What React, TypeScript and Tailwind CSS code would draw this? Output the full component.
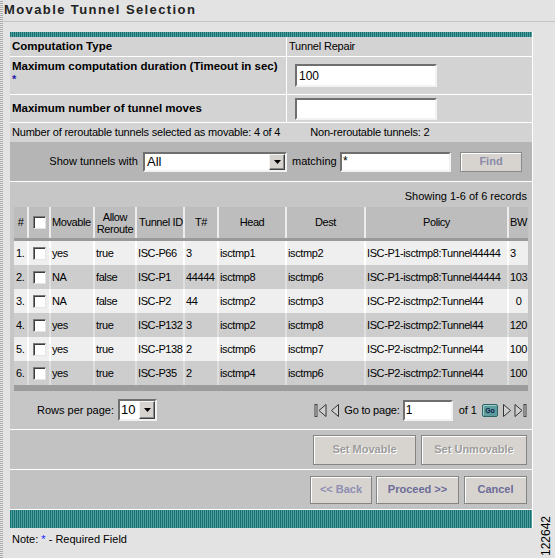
import React from "react";

const rows: string[][] = [
  ["1.", "yes", "true", "ISC-P66", "3", "isctmp1", "isctmp2", "ISC-P1-isctmp8:Tunnel44444", "3"],
  ["2.", "NA", "false", "ISC-P1", "44444", "isctmp8", "isctmp6", "ISC-P1-isctmp8:Tunnel44444", "103"],
  ["3.", "NA", "false", "ISC-P2", "44", "isctmp2", "isctmp3", "ISC-P2-isctmp2:Tunnel44", "0"],
  ["4.", "yes", "true", "ISC-P132", "3", "isctmp2", "isctmp8", "ISC-P2-isctmp2:Tunnel44", "120"],
  ["5.", "yes", "true", "ISC-P138", "2", "isctmp6", "isctmp7", "ISC-P2-isctmp2:Tunnel44", "100"],
  ["6.", "yes", "true", "ISC-P35", "2", "isctmp4", "isctmp6", "ISC-P2-isctmp2:Tunnel44", "100"],
];

function Check() {
  return (
    <span className="block w-[13px] h-[13px] bg-white border border-t-[#7c7c7c] border-l-[#7c7c7c] border-r-[#e4e4e4] border-b-[#e4e4e4] shadow-[inset_1px_1px_0_#3c3c3c]" />
  );
}

function DropBtn() {
  return (
    <div className="w-[16px] h-full bg-[#d6d3ce] border border-t-[#f4f4f4] border-l-[#f4f4f4] border-r-[#404040] border-b-[#404040] shadow-[inset_-1px_-1px_0_#8a8a8a] flex items-center justify-center">
      <svg width="7" height="4" viewBox="0 0 7 4">
        <path d="M0 0h7L3.5 4z" fill="#000" />
      </svg>
    </div>
  );
}

const teal =
  "bg-[repeating-linear-gradient(90deg,#17706f_0_1px,#4f9f9f_1px_2px)]";

export default function App() {
  return (
    <div className="w-[555px] h-[558px] bg-[#e3e3e3] flex relative overflow-hidden font-['Liberation_Sans',Arial,sans-serif] text-[11px] text-black">
      {/* dotted left strip */}
      <div className="w-[3px] h-full bg-[repeating-linear-gradient(0deg,#a9a9a9_0_1px,#e6e6e6_1px_2px)]" />

      <div className="flex-1 flex flex-col">
        {/* title */}
        <div className="h-[22px] border-b border-[#c4c4c4] pl-[1px] pt-[2px]">
          <span className="text-[13px] leading-[16px] font-bold tracking-[1.4px] text-[#222]">
            Movable Tunnel Selection
          </span>
        </div>

        {/* panel */}
        <div className="ml-[7px] mt-[10px] w-[523px] border-r border-white flex flex-col">
          <div className={`h-[5px] ${teal}`} />

          {/* Computation Type */}
          <div className="h-[20px] flex bg-[#d3d3d3] border-b border-white">
            <div className="w-[277px] border-r border-white pl-[2px] flex items-center font-bold text-[11.5px]">
              Computation Type
            </div>
            <div className="flex-1 pl-[2px] flex items-center tracking-[-0.2px]">Tunnel Repair</div>
          </div>

          {/* Max computation duration */}
          <div className="h-[38px] flex bg-[#d3d3d3] border-b border-white">
            <div className="w-[277px] border-r border-white pl-[2px] pt-[3px] flex flex-col leading-[13px]">
              <span className="font-bold text-[11.5px]">Maximum computation duration (Timeout in sec)</span>
              <span className="text-[#1a1ab0] font-bold">*</span>
            </div>
            <div className="flex-1 flex items-center pl-[8px]">
              <div className="w-[142px] h-[23px] bg-white border-2 border-t-[#6f6f6f] border-l-[#6f6f6f] border-r-[#f2f2f2] border-b-[#f2f2f2] pl-[2px] flex items-center text-[12px]">
                100
              </div>
            </div>
          </div>

          {/* Max tunnel moves */}
          <div className="h-[28px] flex bg-[#d3d3d3] border-b border-white">
            <div className="w-[277px] border-r border-white pl-[2px] flex items-center font-bold text-[11.5px]">
              Maximum number of tunnel moves
            </div>
            <div className="flex-1 flex items-center pl-[8px]">
              <div className="w-[142px] h-[22px] bg-white border-2 border-t-[#6f6f6f] border-l-[#6f6f6f] border-r-[#f2f2f2] border-b-[#f2f2f2]" />
            </div>
          </div>

          {/* counts */}
          <div className="h-[19px] flex items-center bg-[#d3d3d3] pl-[2px] tracking-[-0.2px]">
            <span>Number of reroutable tunnels selected as movable: 4 of 4</span>
            <span className="ml-[30px]">Non-reroutable tunnels: 2</span>
          </div>

          {/* filter bar */}
          <div className="h-[40px] flex items-center bg-[#b5b5b5] border-b border-white">
            <div className="w-[133px] text-right pr-[5px]">Show tunnels with</div>
            <div className="w-[144px] h-[20px] flex bg-white border-2 border-t-[#6f6f6f] border-l-[#6f6f6f] border-r-[#f2f2f2] border-b-[#f2f2f2]">
              <span className="flex-1 pl-[2px] text-[13px] leading-[16px]">All</span>
              <DropBtn />
            </div>
            <div className="w-[53px] pl-[5px]">matching</div>
            <div className="w-[111px] h-[20px] bg-white border-2 border-t-[#6f6f6f] border-l-[#6f6f6f] border-r-[#f2f2f2] border-b-[#f2f2f2] pl-[1px] text-[12px] leading-[15px]">
              *
            </div>
            <div className="ml-[9px] w-[62px] h-[20px] bg-[#d7d4cf] border border-[#8a8a8a] shadow-[inset_1px_1px_0_#ffffff] flex items-center justify-center font-bold text-[#8a8aa8]">
              Find
            </div>
          </div>

          {/* table area */}
          <div className="bg-[#c6c6c6] flex flex-col border-b border-white">
            <div className="h-[25px] flex items-end justify-end pr-[5px] pb-[3px]">
              Showing 1-6 of 6 records
            </div>
            <div className="px-[4px] tracking-[-0.4px]">
              {/* header */}
              <div className="grid grid-cols-[13px_20px_42px_40px_46px_32px_66px_77px_141px_19px] gap-x-[2px] bg-[#ececec] h-[31px] whitespace-nowrap">
                <div className="bg-[#bdbdbd] flex items-center justify-center">#</div>
                <div className="bg-[#bdbdbd] flex items-center justify-center"><Check /></div>
                <div className="bg-[#bdbdbd] flex items-center pl-[1px]">Movable</div>
                <div className="bg-[#bdbdbd] flex items-center justify-center text-center leading-[12px]">Allow<br />Reroute</div>
                <div className="bg-[#bdbdbd] flex items-center pl-[2px]">Tunnel ID</div>
                <div className="bg-[#bdbdbd] flex items-center justify-center">T#</div>
                <div className="bg-[#bdbdbd] flex items-center justify-center">Head</div>
                <div className="bg-[#bdbdbd] flex items-center justify-center">Dest</div>
                <div className="bg-[#bdbdbd] flex items-center justify-center">Policy</div>
                <div className="bg-[#bdbdbd] flex items-center pl-[1px]">BW</div>
              </div>
              <div className="h-[3px] bg-[#9a9a9a]" />
              {rows.map((r, i) => {
                const light = i % 2 === 0;
                const cell = light ? "bg-[#efefef]" : "bg-[#cdcdcd]";
                const bwAlign =
                  i < 2 ? "justify-start pl-[1px]" : i === 2 ? "justify-center" : "justify-end pr-[1px]";
                return (
                  <div
                    key={i}
                    className={`grid grid-cols-[13px_20px_42px_40px_46px_32px_66px_77px_141px_19px] gap-x-[2px] h-[24px] whitespace-nowrap ${
                      light ? "bg-white" : "bg-[#dedede]"
                    }`}
                  >
                    <div className={`${cell} flex items-center pl-[2px]`}>{r[0]}</div>
                    <div className={`${cell} flex items-center justify-center`}><Check /></div>
                    <div className={`${cell} flex items-center pl-[1px]`}>{r[1]}</div>
                    <div className={`${cell} flex items-center pl-[1px]`}>{r[2]}</div>
                    <div className={`${cell} flex items-center pl-[1px]`}>{r[3]}</div>
                    <div className={`${cell} flex items-center pl-[1px]`}>{r[4]}</div>
                    <div className={`${cell} flex items-center pl-[1px]`}>{r[5]}</div>
                    <div className={`${cell} flex items-center pl-[1px]`}>{r[6]}</div>
                    <div className={`${cell} flex items-center pl-[1px]`}>{r[7]}</div>
                    <div className={`${cell} flex items-center ${bwAlign}`}>{r[8]}</div>
                  </div>
                );
              })}
              <div className="h-[6px] bg-[#9c9c9c]" />
            </div>

            {/* pagination */}
            <div className="h-[38px] flex items-center">
              <div className="w-[108px] text-right pr-[4px]">Rows per page:</div>
              <div className="w-[39px] h-[22px] flex bg-white border-2 border-t-[#6f6f6f] border-l-[#6f6f6f] border-r-[#f2f2f2] border-b-[#f2f2f2]">
                <span className="flex-1 pl-[1px] text-[13px] leading-[18px]">10</span>
                <DropBtn />
              </div>
              <div className="ml-auto pr-[5px] flex items-center">
                <svg width="13" height="15" viewBox="0 0 13 15">
                  <rect x="1" y="1.5" width="2" height="12" fill="#d8d8d8" stroke="#333" strokeWidth="0.9" />
                  <path d="M12 1.5L5 7.5l7 6z" fill="#d0d0d0" stroke="#333" strokeWidth="1" />
                </svg>
                <svg width="10" height="15" viewBox="0 0 10 15" className="ml-[3px]">
                  <path d="M8.5 1.5L1.5 7.5l7 6z" fill="#d0d0d0" stroke="#333" strokeWidth="1" />
                </svg>
                <span className="ml-[4px] tracking-[-0.2px]">Go to page:</span>
                <div className="ml-[3px] w-[50px] h-[21px] bg-white border-2 border-t-[#6f6f6f] border-l-[#6f6f6f] border-r-[#f2f2f2] border-b-[#f2f2f2] pl-[1px] text-[12px] leading-[17px]">
                  1
                </div>
                <span className="ml-[6px]">of 1</span>
                <div className="ml-[5px] w-[16px] h-[13px] rounded-[2px] bg-[#5c9c9c] border border-[#2e6464] shadow-[inset_1px_1px_0_#9ccccc] flex items-center justify-center text-[7px] font-bold text-[#10204a] leading-none">
                  Go
                </div>
                <svg width="10" height="15" viewBox="0 0 10 15" className="ml-[4px]">
                  <path d="M1.5 1.5l7 6-7 6z" fill="#d0d0d0" stroke="#333" strokeWidth="1" />
                </svg>
                <svg width="13" height="15" viewBox="0 0 13 15" className="ml-[2px]">
                  <path d="M1 1.5l7 6-7 6z" fill="#d0d0d0" stroke="#333" strokeWidth="1" />
                  <rect x="10" y="1.5" width="2" height="12" fill="#d8d8d8" stroke="#333" strokeWidth="0.9" />
                </svg>
              </div>
            </div>
          </div>

          {/* set buttons */}
          <div className="h-[40px] flex items-center justify-end pr-[5px] gap-[5px] bg-[#c2c2c2] border-b border-white">
            <div className="w-[103px] h-[30px] bg-[#d7d4cf] border border-[#858585] shadow-[inset_1px_1px_0_#ffffff] flex items-center justify-center font-bold text-[#9c9c9c] [text-shadow:1px_1px_0_#ffffff]">
              Set Movable
            </div>
            <div className="w-[106px] h-[30px] bg-[#d7d4cf] border border-[#858585] shadow-[inset_1px_1px_0_#ffffff] flex items-center justify-center font-bold text-[#9c9c9c] [text-shadow:1px_1px_0_#ffffff]">
              Set Unmovable
            </div>
          </div>

          {/* nav buttons */}
          <div className="h-[40px] flex items-center justify-end pr-[5px] bg-[#c2c2c2] border-b border-white">
            <div className="w-[62px] h-[28px] bg-[#d7d4cf] border border-[#858585] shadow-[inset_1px_1px_0_#ffffff] flex items-center justify-center font-bold text-[#8e8eb4]">
              &lt;&lt; Back
            </div>
            <div className="ml-[4px] w-[83px] h-[28px] bg-[#d7d4cf] border border-[#858585] shadow-[inset_1px_1px_0_#ffffff] flex items-center justify-center font-bold text-[#6c6c98]">
              Proceed &gt;&gt;
            </div>
            <div className="ml-[5px] w-[63px] h-[28px] bg-[#d7d4cf] border border-[#858585] shadow-[inset_1px_1px_0_#ffffff] flex items-center justify-center font-bold text-[#6c6c98]">
              Cancel
            </div>
          </div>

          <div className={`h-[18px] ${teal}`} />
        </div>

        {/* note */}
        <div className="ml-[9px] mt-[5px] leading-[12px]">
          Note: <span className="text-[#1a1aff]">*</span> - Required Field
        </div>
      </div>

      {/* figure id */}
      <span className="absolute right-[2px] bottom-[2px] [writing-mode:vertical-rl] rotate-180 text-[12px] leading-[13px] text-black">
        122642
      </span>
    </div>
  );
}
